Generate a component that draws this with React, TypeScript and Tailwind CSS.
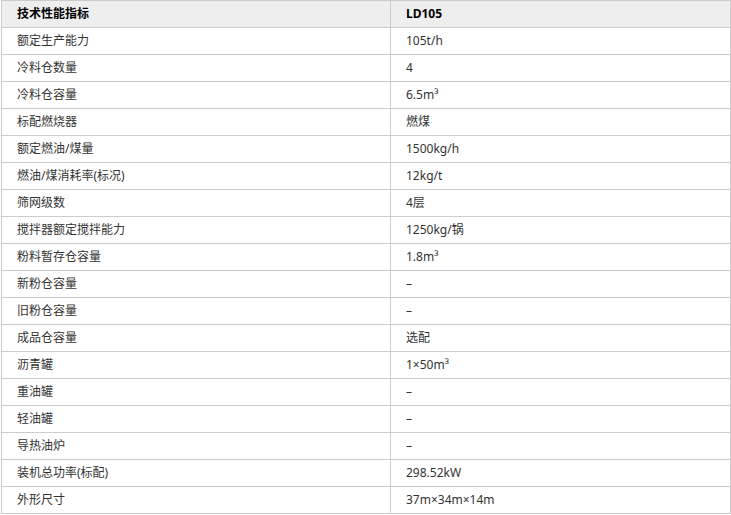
const rows: [string, string][] = [
  ["额定生产能力", "105t/h"],
  ["冷料仓数量", "4"],
  ["冷料仓容量", "6.5m³"],
  ["标配燃烧器", "燃煤"],
  ["额定燃油/煤量", "1500kg/h"],
  ["燃油/煤消耗率(标况)", "12kg/t"],
  ["筛网级数", "4层"],
  ["搅拌器额定搅拌能力", "1250kg/锅"],
  ["粉料暂存仓容量", "1.8m³"],
  ["新粉仓容量", "–"],
  ["旧粉仓容量", "–"],
  ["成品仓容量", "选配"],
  ["沥青罐", "1×50m³"],
  ["重油罐", "–"],
  ["轻油罐", "–"],
  ["导热油炉", "–"],
  ["装机总功率(标配)", "298.52kW"],
  ["外形尺寸", "37m×34m×14m"],
];

export default function App() {
  return (
    <div className="w-[731px] h-[515px] bg-white pl-[1px] font-['Noto_Sans','Noto_Sans_CJK_SC',sans-serif] text-[12px] text-[#333]">
      <table className="w-[730px] border-collapse table-fixed">
        <colgroup>
          <col className="w-[389px]" />
          <col className="w-[340px]" />
        </colgroup>
        <thead>
          <tr className="bg-[#eeeeee]">
            <th className="h-[27px] border border-[#cccccc] px-[15px] py-0 text-left font-bold text-black">技术性能指标</th>
            <th className="h-[27px] border border-[#cccccc] px-[15px] py-0 text-left font-bold text-black">LD105</th>
          </tr>
        </thead>
        <tbody>
          {rows.map(([k, v]) => (
            <tr key={k}>
              <td className="h-[27px] border border-[#cccccc] px-[15px] py-0">{k}</td>
              <td className="h-[27px] border border-[#cccccc] px-[15px] py-0">{v}</td>
            </tr>
          ))}
        </tbody>
      </table>
    </div>
  );
}
